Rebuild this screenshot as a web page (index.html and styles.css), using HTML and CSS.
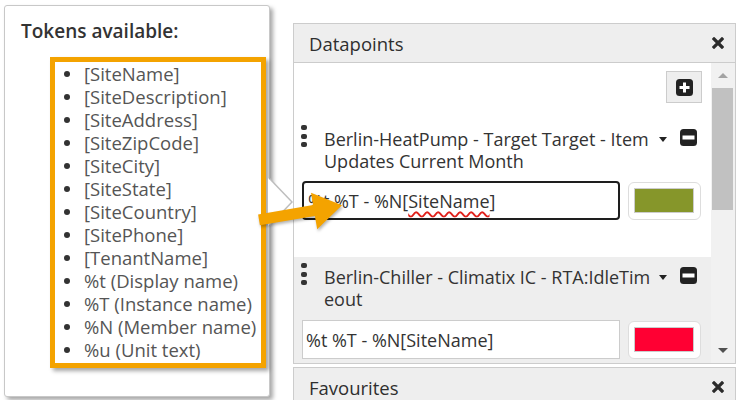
FILE: index.html
```html
<!DOCTYPE html>
<html lang="en">
<head>
<meta charset="utf-8">
<title>Datapoints</title>
<link rel="stylesheet" href="styles.css">
</head>
<body>
<div class="page">
  <div class="main">
    <section class="panel datapoints">
      <header class="panel-head">
        <span class="panel-title">Datapoints</span>
        <svg class="close" viewBox="0 0 12 12" width="12" height="12"><path d="M2 2L10 10M10 2L2 10" stroke="#2b2b2b" stroke-width="3.2" stroke-linecap="square"/></svg>
      </header>
      <div class="panel-body">
        <div class="dp-list">
          <div class="dp-item first">
            <div class="toolbar">
              <button class="btn-add" type="button">
                <svg viewBox="0 0 17 17" width="17" height="17"><rect width="17" height="17" rx="3.5" fill="#222"/><path d="M8.5 3.5v10M3.5 8.5h10" stroke="#fff" stroke-width="3"/></svg>
              </button>
            </div>
            <div class="dp-head">
              <span class="handle"><i></i><i></i><i></i></span>
              <span class="dp-name">Berlin-HeatPump - Target Target - Item<br>Updates Current Month</span>
              <span class="caret"></span>
              <svg class="minus" viewBox="0 0 17 17" width="17" height="17"><rect width="17" height="17" rx="3.5" fill="#222"/><rect x="2.5" y="6.5" width="12" height="4" fill="#fff"/></svg>
            </div>
            <div class="dp-row">
              <div class="fmt-input focused">%t %T - %N[<span class="misspelled">SiteName</span>]</div>
              <div class="swatch"><span class="swatch-color" style="background:#86962a"></span></div>
            </div>
          </div>
          <div class="dp-item second">
            <div class="dp-head">
              <span class="handle"><i></i><i></i><i></i></span>
              <span class="dp-name">Berlin-Chiller - Climatix IC - RTA:IdleTim<br>eout</span>
              <span class="caret"></span>
              <svg class="minus" viewBox="0 0 17 17" width="17" height="17"><rect width="17" height="17" rx="3.5" fill="#222"/><rect x="2.5" y="6.5" width="12" height="4" fill="#fff"/></svg>
            </div>
            <div class="dp-row">
              <div class="fmt-input">%t %T - %N[SiteName]</div>
              <div class="swatch"><span class="swatch-color" style="background:#ff0033"></span></div>
            </div>
          </div>
        </div>
        <div class="scrollbar">
          <div class="sb-btn"><span class="sb-up"></span></div>
          <div class="sb-thumb"></div>
          <div class="sb-space"></div>
          <div class="sb-btn"><span class="sb-down"></span></div>
        </div>
      </div>
    </section>
    <section class="panel favourites">
      <header class="panel-head">
        <span class="panel-title">Favourites</span>
        <svg class="close" viewBox="0 0 12 12" width="12" height="12"><path d="M2 2L10 10M10 2L2 10" stroke="#2b2b2b" stroke-width="3.2" stroke-linecap="square"/></svg>
      </header>
      <div class="fav-body"></div>
    </section>
  </div>

  <div class="popover">
    <div class="pop-title">Tokens available:</div>
    <div class="tokens-box">
      <ul class="tokens">
        <li>[SiteName]</li>
        <li>[SiteDescription]</li>
        <li>[SiteAddress]</li>
        <li>[SiteZipCode]</li>
        <li>[SiteCity]</li>
        <li>[SiteState]</li>
        <li>[SiteCountry]</li>
        <li>[SitePhone]</li>
        <li>[TenantName]</li>
        <li>%t (Display name)</li>
        <li>%T (Instance name)</li>
        <li>%N (Member name)</li>
        <li>%u (Unit text)</li>
      </ul>
    </div>
  </div>

  <svg class="annotation" viewBox="0 0 740 400" width="740" height="400">
    <polygon points="258.1,214.4 313.1,205.1 311,192.8 342,205.3 317.2,229.2 314.9,215.9 259.9,225.2" fill="#f4a300"/>
  </svg>
</div>
</body>
</html>
```

FILE: styles.css
```css
* {
  box-sizing: border-box;
}

html,
body {
  margin: 0;
  padding: 0;
}

body {
  width: 740px;
  height: 400px;
  overflow: hidden;
  background: #fff;
  font-family: "Open Sans", "Noto Sans", sans-serif;
  color: #333;
}

.page {
  position: relative;
  width: 740px;
  height: 400px;
  overflow: hidden;
}

/* ---------- right side panels ---------- */
.main {
  display: flex;
  flex-direction: column;
  gap: 3px;
  padding: 23px 4px 0 293px;
}

.panel {
  border: 1px solid #ccc;
  background: #fff;
}

.panel-head {
  height: 39px;
  display: flex;
  align-items: center;
  justify-content: space-between;
  padding: 0 11px 0 15px;
  background: #eee;
  border-bottom: 1px solid #ccc;
  font-size: 18.5px;
  color: #2e2e2e;
}

.close {
  display: block;
}

.panel-body {
  display: flex;
  height: 300px;
}

.dp-list {
  flex: 1;
  overflow: hidden;
}

.dp-item {
  padding: 0 9px 0 8px;
}

.dp-item.first {
  padding-top: 8px;
  padding-bottom: 37px;
  background: #fff;
}

.dp-item.second {
  padding-top: 9px;
  padding-bottom: 4px;
  background: #eee;
}

.toolbar {
  display: flex;
  justify-content: flex-end;
  margin-bottom: 25px;
}

.btn-add {
  width: 36px;
  height: 32px;
  margin: 0;
  padding: 0;
  display: flex;
  align-items: center;
  justify-content: center;
  background: #eee;
  border: 1px solid #ccc;
  border-radius: 0;
}

.btn-add svg {
  display: block;
}

.dp-head {
  display: flex;
  align-items: flex-start;
  padding-right: 5px;
}

.handle {
  display: flex;
  flex-direction: column;
  gap: 3.5px;
  width: 6px;
  margin: -3px 17px 0 -1px;
}

.handle i {
  display: block;
  width: 6px;
  height: 5px;
  border-radius: 2px;
  background: #333;
}

.dp-name {
  flex: 1;
  font-size: 18px;
  line-height: 22px;
  white-space: nowrap;
  color: #333;
}

.caret {
  width: 0;
  height: 0;
  margin: 9px 13px 0 0;
  border-left: 4.5px solid transparent;
  border-right: 4.5px solid transparent;
  border-top: 5px solid #222;
}

.minus {
  display: block;
  margin-top: 1px;
}

.dp-row {
  display: flex;
  gap: 8px;
  margin-top: 9px;
}

.dp-item.second .dp-row {
  margin-top: 10px;
}

.fmt-input {
  width: 318px;
  height: 39px;
  display: flex;
  align-items: center;
  padding-left: 3px;
  background: #fff;
  border: 1px solid #ccc;
  font-size: 18px;
  color: #333;
  white-space: nowrap;
}

.fmt-input.focused {
  border: 2px solid #1e1e1e;
  border-radius: 4px;
  padding-left: 4px;
}

.misspelled {
  text-decoration: underline wavy #e0201a;
  text-decoration-thickness: 1.5px;
  text-underline-offset: 3px;
  text-decoration-skip-ink: none;
}

.swatch {
  width: 73px;
  height: 38px;
  margin-top: 1px;
  display: flex;
  padding: 5px 6px 6px 5px;
  background: #fff;
  border: 1px solid #ddd;
  border-radius: 6px;
}

.swatch-color {
  flex: 1;
  border: 1px solid #ccc;
}

.scrollbar {
  width: 24px;
  display: flex;
  flex-direction: column;
  background: #f1f1f1;
}

.sb-btn {
  height: 25px;
  display: flex;
  align-items: center;
  justify-content: center;
  padding-right: 1px;
}

.sb-up {
  width: 0;
  height: 0;
  border-left: 5.5px solid transparent;
  border-right: 5.5px solid transparent;
  border-bottom: 5px solid #a3a3a3;
}

.sb-down {
  width: 0;
  height: 0;
  border-left: 5.5px solid transparent;
  border-right: 5.5px solid transparent;
  border-top: 5px solid #505050;
}

.sb-thumb {
  height: 122px;
  margin: 0 2px 0 1px;
  background: #c1c1c1;
}

.sb-space {
  flex: 1;
}

.fav-body {
  height: 60px;
}

/* ---------- tokens popover ---------- */
.popover {
  position: absolute;
  left: 4px;
  top: 5px;
  width: 266px;
  height: 392px;
  padding: 12px 3px 0 0;
  background: #fff;
  border: 1px solid #c8c8c8;
  border-radius: 3px;
  box-shadow: 3px 3px 4px rgba(0, 0, 0, 0.35);
}

.popover::before,
.popover::after {
  content: "";
  position: absolute;
  top: 172px;
  left: 100%;
  width: 0;
  height: 0;
  border-top: 24px solid transparent;
  border-bottom: 24px solid transparent;
}

.popover::before {
  margin-left: 1px;
  border-left: 23px solid #bdbdbd;
}

.popover::after {
  margin-left: -1px;
  border-left: 23px solid #fff;
}

.pop-title {
  margin-left: 16px;
  font-size: 19px;
  font-weight: 600;
  line-height: 26px;
  color: #333;
}

.tokens-box {
  margin: 13px 0 0 45px;
  padding-bottom: 2px;
  background: #fff;
  border: 5px solid #f4a300;
  box-shadow: 3px 3px 4px rgba(0, 0, 0, 0.35);
}

.tokens {
  margin: 0;
  padding: 0;
  list-style: none;
}

.tokens li {
  display: flex;
  align-items: center;
  height: 23px;
  font-size: 18.5px;
  line-height: 23px;
  color: #555;
  white-space: nowrap;
}

.tokens li::before {
  content: "";
  flex: none;
  width: 6px;
  height: 6px;
  margin: 0 14px 0 9px;
  border-radius: 50%;
  background: #333;
}

/* ---------- annotation arrow ---------- */
.annotation {
  position: absolute;
  left: 0;
  top: 0;
  pointer-events: none;
  filter: drop-shadow(1px 2px 1.5px rgba(0, 0, 0, 0.3));
}
```
